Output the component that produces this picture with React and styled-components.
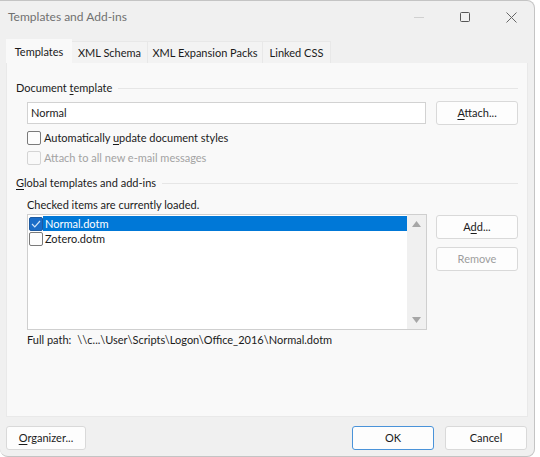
import React from "react";
import styled, { createGlobalStyle } from "styled-components";

const Global = createGlobalStyle`
  html, body { margin: 0; padding: 0; background: #ffffff; }
  body { font-family: "Segoe UI", Lato, "Noto Sans", sans-serif; font-size: 11px; line-height: 16px; color: #1b1b1b; }
  * { box-sizing: border-box; }
`;

const Window = styled.div`
  width: 535px;
  height: 457px;
  background: #f0f0f0;
  border: 1px solid #c4c4c4;
  border-left: none;
  border-radius: 0 8px 8px 8px;
  display: flex;
  flex-direction: column;
  overflow: hidden;
`;

const TitleBar = styled.div`
  height: 32px;
  display: flex;
  align-items: center;
  padding-left: 8px;
  color: #707070;
  font-size: 12px;
`;

const Title = styled.div`
  flex: 1;
`;

const WinBtn = styled.div`
  width: 46px;
  height: 32px;
  display: flex;
  align-items: center;
  justify-content: center;
`;

const TabRow = styled.div`
  display: flex;
  padding-left: 6px;
  margin-top: 6px;
  height: 24px;
  align-items: flex-end;
`;

const Tab = styled.div`
  height: ${(p) => (p.$active ? "24px" : "22px")};
  width: ${(p) => p.$w}px;
  white-space: nowrap;
  display: flex;
  align-items: center;
  justify-content: center;
  background: ${(p) => (p.$active ? "#f9f9f9" : "#f3f3f3")};
  border: 1px solid ${(p) => (p.$active ? "#f9f9f9" : "#e8e8e8")};
  border-bottom: none;
  margin-left: ${(p) => (p.$active ? "0" : "-1px")};
  color: #1b1b1b;
  position: relative;
  z-index: ${(p) => (p.$active ? 1 : 0)};
`;

const Panel = styled.div`
  margin: 0 6px 0 6px;
  width: 522px;
  height: 354px;
  background: #f9f9f9;
  border: 1px solid #e9e9e9;
  border-top: none;
  padding: 17px 9px 0 9px;
  display: flex;
  flex-direction: column;
`;

const GroupHeader = styled.div`
  display: flex;
  align-items: center;
  gap: 6px;
  height: 16px;
  margin-top: ${(p) => p.$mt || 0}px;
`;

const Rule = styled.div`
  flex: 1;
  height: 1px;
  background: #e6e6e6;
`;

const Indent = styled.div`
  padding-left: 11px;
  display: flex;
  flex-direction: column;
`;

const Row = styled.div`
  display: flex;
  align-items: ${(p) => p.$align || "center"};
  gap: ${(p) => (p.$gap != null ? p.$gap : 10)}px;
  margin-top: ${(p) => p.$mt || 0}px;
`;

const TextInput = styled.div`
  width: 400px;
  height: 22px;
  background: #ffffff;
  border: 1px solid #d2d2d2;
  padding-left: 3px;
  display: flex;
  align-items: center;
`;

const Button = styled.div`
  width: ${(p) => p.$w || 82}px;
  height: 24px;
  background: #fdfdfd;
  border: 1px solid ${(p) => (p.$default ? "#4a93d9" : "#d9d9d9")};
  border-radius: 3px;
  display: flex;
  align-items: center;
  justify-content: center;
  color: ${(p) => (p.$disabled ? "#9d9d9d" : "#1b1b1b")};
`;

const Check = styled.div`
  width: 14px;
  height: 14px;
  border: 1px solid ${(p) => (p.$disabled ? "#d4d4d4" : p.$on ? "#1e5aa0" : "#7a7a7a")};
  border-radius: 2px;
  background: ${(p) => (p.$on ? "#1a6cc8" : p.$disabled ? "#f9f9f9" : "#fdfdfd")};
  display: flex;
  align-items: center;
  justify-content: center;
  flex-shrink: 0;
`;

const CheckLabel = styled.span`
  color: ${(p) => (p.$disabled ? "#a3a3a3" : "#1b1b1b")};
`;

const U = styled.span`
  text-decoration: underline;
  text-underline-offset: 2px;
`;

const ListBox = styled.div`
  width: 401px;
  height: 116px;
  background: #ffffff;
  border: 1px solid #cfcfcf;
  display: flex;
`;

const ListItems = styled.div`
  flex: 1;
  padding: 1px 0 0 1px;
  display: flex;
  flex-direction: column;
`;

const ListRow = styled.div`
  display: flex;
  align-items: center;
  height: 15px;
  line-height: 15px;
`;

const ItemText = styled.div`
  flex: 1;
  height: 15px;
  padding-left: 2px;
  display: flex;
  align-items: center;
  background: ${(p) => (p.$sel ? "#0078d7" : "transparent")};
  color: ${(p) => (p.$sel ? "#ffffff" : "#1b1b1b")};
`;

const ScrollBar = styled.div`
  width: 19px;
  background: #f0f0f0;
  display: flex;
  flex-direction: column;
  justify-content: space-between;
  align-items: center;
  padding: 6px 0;
`;

const SideButtons = styled.div`
  display: flex;
  flex-direction: column;
  gap: 8px;
  margin-top: 1px;
`;

const PathRow = styled.div`
  display: flex;
  margin-top: 2px;
  gap: 6px;
`;

const Footer = styled.div`
  flex: 1;
  display: flex;
  align-items: center;
  padding: 3px 7px 0 6px;
  gap: 10px;
`;

const Spacer = styled.div`
  flex: 1;
`;

const Arrow = ({ up }) => (
  <svg width="9" height="6" viewBox="0 0 9 6">
    <path d={up ? "M0 6 L4.5 0 L9 6 Z" : "M0 0 L4.5 6 L9 0 Z"} fill="#a6a6a6" />
  </svg>
);

const Tick = () => (
  <svg width="10" height="8" viewBox="0 0 10 8">
    <path d="M1 4 L3.8 6.8 L9 1" stroke="#cfe3f8" strokeWidth="1.2" fill="none" />
  </svg>
);

export default function App() {
  return (
    <>
      <Global />
      <Window>
        <TitleBar>
          <Title>Templates and Add-ins</Title>
          <WinBtn>
            <svg width="10" height="10" viewBox="0 0 10 10">
              <path d="M0 5.5 H10" stroke="#d0d0d0" strokeWidth="1" />
            </svg>
          </WinBtn>
          <WinBtn>
            <svg width="10" height="10" viewBox="0 0 10 10">
              <rect x="0.5" y="0.5" width="9" height="9" rx="1" stroke="#555" fill="none" strokeWidth="1" />
            </svg>
          </WinBtn>
          <WinBtn>
            <svg width="11" height="11" viewBox="0 0 11 11">
              <path d="M0.5 0.5 L10.5 10.5 M10.5 0.5 L0.5 10.5" stroke="#666" strokeWidth="1" />
            </svg>
          </WinBtn>
        </TitleBar>
        <TabRow>
          <Tab $active $w={66}>Templates</Tab>
          <Tab $w={77}>XML Schema</Tab>
          <Tab $w={116}>XML Expansion Packs</Tab>
          <Tab $w={69}>Linked CSS</Tab>
        </TabRow>
        <Panel>
          <GroupHeader>
            <span>
              Document <U>t</U>emplate
            </span>
            <Rule />
          </GroupHeader>
          <Indent>
            <Row $mt={5}>
              <TextInput>Normal</TextInput>
              <Button>
                <span>
                  <U>A</U>ttach...
                </span>
              </Button>
            </Row>
            <Row $mt={5} $gap={3}>
              <Check />
              <CheckLabel>
                Automatically <U>u</U>pdate document styles
              </CheckLabel>
            </Row>
            <Row $mt={4} $gap={3}>
              <Check $disabled />
              <CheckLabel $disabled>Attach to all new e-mail messages</CheckLabel>
            </Row>
          </Indent>
          <GroupHeader $mt={9}>
            <span>
              <U>G</U>lobal templates and add-ins
            </span>
            <Rule />
          </GroupHeader>
          <Indent>
            <Row $mt={6}>Checked items are currently loaded.</Row>
            <Row $mt={1} $align="flex-start" $gap={9}>
              <ListBox>
                <ListItems>
                  <ListRow>
                    <Check $on>
                      <Tick />
                    </Check>
                    <ItemText $sel>Normal.dotm</ItemText>
                  </ListRow>
                  <ListRow>
                    <Check />
                    <ItemText>Zotero.dotm</ItemText>
                  </ListRow>
                </ListItems>
                <ScrollBar>
                  <Arrow up />
                  <Arrow />
                </ScrollBar>
              </ListBox>
              <SideButtons>
                <Button>
                  <span>
                    A<U>d</U>d...
                  </span>
                </Button>
                <Button $disabled>Remove</Button>
              </SideButtons>
            </Row>
            <PathRow>
              <span>Full path:</span>
              <span>\\c...\User\Scripts\Logon\Office_2016\Normal.dotm</span>
            </PathRow>
          </Indent>
        </Panel>
        <Footer>
          <Button $w={80}>
            <span>
              <U>O</U>rganizer...
            </span>
          </Button>
          <Spacer />
          <Button $default style={{ marginRight: 1 }}>OK</Button>
          <Button>Cancel</Button>
        </Footer>
      </Window>
    </>
  );
}
